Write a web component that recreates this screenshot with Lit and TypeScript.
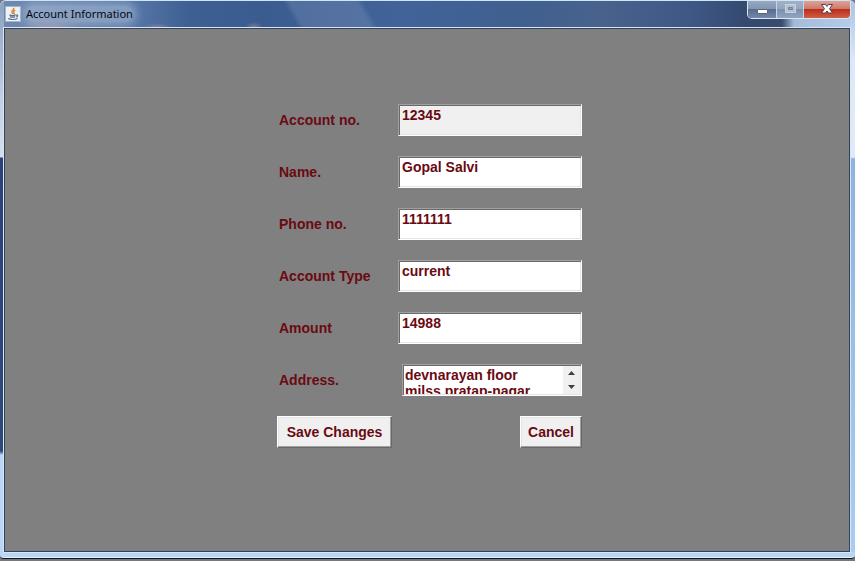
import { LitElement, html, css, svg } from "lit";
import { customElement, state } from "lit/decorators.js";

interface Field {
  id: string;
  label: string;
  value: string;
  readonly?: boolean;
}

const fields: Field[] = [
  { id: "account-no", label: "Account no.", value: "12345", readonly: true },
  { id: "name", label: "Name.", value: "Gopal Salvi" },
  { id: "phone", label: "Phone no.", value: "1111111" },
  { id: "type", label: "Account Type", value: "current" },
  { id: "amount", label: "Amount", value: "14988" },
];

const javaIcon = svg`
  <rect x="0.5" y="0.5" width="15" height="15" fill="#eef1f5" stroke="#a3b4c9"/>
  <path d="M8.800 1.800c.8 1.600-2.600 2.500-1.900 4.200.2.6.8 1.100 1 1.900M10.200 4.200c-1.800.8-2 1.500-1.200 2.500.4.5.2 1-.3 1.500" fill="none" stroke="#e0782a" stroke-width="1.300"/>
  <path d="M4.400 8.900c1.600.8 4.700.7 6.200 0M5 10.600c1.400.7 3.600.7 5.200 0M3.200 12.600c2 1.300 7.300 1.100 9.300-.2M10.900 9.200c2.400-.7 2.400 1.300.3 2.100" fill="none" stroke="#4f7196" stroke-width="1.200"/>`;

@customElement("app-root")
export class AppRoot extends LitElement {
  @state() private address = "devnarayan floor\nmilss pratap-nagar";

  static styles = css`
    :host {
      display: block;
      font-family: "Liberation Sans", Arial, sans-serif;
      --ink: #6a0a12;
      --face: #f0f0f0;
    }
    * { box-sizing: border-box; }
    .desktop {
      display: flex;
      flex-direction: column;
      min-height: 100vh;
      padding-bottom: 2px;
      background: #74787c;
    }
    .window {
      flex: 1;
      display: flex;
      flex-direction: column;
      padding: 0 4px 6px;
      border-top: 1px solid #cfe6fa;
      border-bottom: 1px solid #10161e;
      border-radius: 6px 6px 4px 4px;
      box-shadow: inset 0 -1px #e6f3fe;
      background:
        linear-gradient(#b9d6f4, #b9d6f4) bottom / 100% 6px no-repeat,
        linear-gradient(#8ba1c0 0, #c3d0e4 100px, #d5deed 156px, #2c4375 157px, #2f4979 450px, #b9d6f4 454px) left / 4px 100% no-repeat,
        linear-gradient(#a9c4e2 0, #dce9f8 60px, #e0ebf8 156px, #8db4de 158px, #a9cdf3 100%) right / 5px 100% no-repeat,
        radial-gradient(ellipse 9px 6px at 254px 27px, #b38f95aa, transparent) top / 100% 27px no-repeat,
        radial-gradient(ellipse 32px 8px at 50px 27px, #b094a4aa, transparent) top / 100% 27px no-repeat,
        radial-gradient(ellipse 14px 5px at 157px 27px, #a68fa4aa, transparent) top / 100% 27px no-repeat,
        linear-gradient(60deg, transparent 258px, #ffffff1c 264px, #ffffff1c 322px, transparent 328px) top / 100% 27px no-repeat,
        linear-gradient(90deg, #7089b0 0, #5878a7 130px, #3e5f92 190px, #3b5c90 260px, #41639a 400px, #40608f 520px, #48628d 600px, #3f5785 690px, #34496f 750px, #3a4c70 782px, #a4bcda 794px, #b4cdea 100%) top / 100% 27px no-repeat,
        #b9d6f4;
    }
    .titlebar {
      display: flex;
      align-items: flex-start;
      height: 27px;
      padding-left: 1px;
    }
    .caption {
      display: flex;
      align-items: center;
      gap: 5px;
      height: 25px;
    }
    .caption svg { display: block; }
    h1 {
      margin: 0;
      font: 400 11px/16px "Noto Sans", "Open Sans", sans-serif;
      color: #05080e;
      background: #c4d2e466;
      border-radius: 8px;
      box-shadow: 0 0 8px 4px #c4d2e466;
    }
    .controls {
      display: flex;
      margin-left: auto;
      height: 18px;
      border: 1px solid #dce6f2;
      border-top: 0;
      border-radius: 0 0 5px 5px;
      overflow: hidden;
    }
    .controls button {
      display: grid;
      place-items: center;
      width: 27px;
      padding: 0;
      border: 0;
      border-right: 1px solid #c8d3e2;
      background: linear-gradient(#98a8c0, #8496b2 45%, #586c90 50%, #7488aa);
    }
    .controls .minimise { width: 29px; }
    .controls .maximise { background: linear-gradient(#a1b1c8, #95a6be 45%, #7c90ae 50%, #91a5c0); }
    .controls .close {
      width: 46px;
      border-right: 0;
      background: linear-gradient(#dda294, #cf796b 45%, #b92f1c 50%, #d15f42);
    }
    .client {
      flex: 1;
      display: flex;
      justify-content: center;
      align-items: flex-start;
      margin-right: 1px;
      padding: 75px 0 20px 5px;
      border: 1px solid #33435c;
      outline: 1px solid #d8e6f5;
      background: #808080;
    }
    form {
      display: flex;
      flex-direction: column;
      gap: 20px;
      width: 305px;
      font-size: 14px;
      line-height: 16px;
      font-weight: 700;
      color: var(--ink);
    }
    .row {
      display: grid;
      grid-template-columns: 121px minmax(0, 1fr);
      align-items: center;
    }
    label { padding-left: 2px; }
    input, textarea, form button {
      font: inherit;
      color: inherit;
      border-radius: 0;
      outline: 0;
    }
    input, .area {
      height: 32px;
      border: 1px solid;
      border-color: #a0a0a0 #fff #fff #a0a0a0;
      box-shadow: inset 1px 1px #696969, inset -1px -1px #e3e3e3;
      background: #fff;
    }
    input {
      width: 100%;
      min-width: 0;
      padding: 2px 3px 12px;
    }
    input:read-only { background: var(--face); }
    .area {
      display: flex;
      margin-left: 4px;
      padding: 1px;
    }
    textarea {
      flex: 1;
      min-width: 0;
      height: 28px;
      margin: 0;
      padding: 1px 0 0 1px;
      border: 0;
      resize: none;
      overflow: hidden;
      white-space: pre;
      background: transparent;
    }
    .scroll {
      display: flex;
      flex-direction: column;
      width: 17px;
    }
    .scroll button {
      flex: 1;
      display: grid;
      place-items: center;
      padding: 0;
      border: 0;
      background: var(--face);
    }
    .actions {
      display: flex;
      justify-content: space-between;
    }
    .actions button {
      height: 32px;
      min-width: 62px;
      padding: 0 6px;
      border: 1px solid;
      border-color: #fff #696969 #696969 #fff;
      box-shadow: inset -1px -1px #a0a0a0, inset 1px 1px #e3e3e3;
      background: var(--face);
    }
    .actions .save { min-width: 115px; }
  `;

  private scrollAddress(step: number) {
    this.renderRoot.querySelector("textarea")?.scrollBy(0, step);
  }

  render() {
    return html`
      <div class="desktop">
        <section class="window">
          <header class="titlebar">
            <div class="caption">
              <svg width="16" height="16" viewBox="0 0 16 16" aria-hidden="true">${javaIcon}</svg>
              <h1>Account Information</h1>
            </div>
            <div class="controls">
              <button class="minimise" aria-label="Minimise">
                <svg width="13" height="13" viewBox="0 0 13 13"><rect x="1.500" y="6.500" width="10" height="4" rx="0.500" fill="#fff" stroke="#5b6577"/></svg>
              </button>
              <button class="maximise" aria-label="Maximise" disabled>
                <svg width="13" height="13" viewBox="0 0 13 13"><path d="M1.500 1.500h10v8h-10z" fill="#b3c0d2" stroke="#c9d4e1"/><path d="M4.500 4.500h4v2h-4z" fill="#8b9cb5" stroke="#71839e"/></svg>
              </button>
              <button class="close" aria-label="Close">
                <svg width="14" height="13" viewBox="0 0 14 13"><path d="M1.500 1.500h4l1.500 2 1.500-2h4L9.500 5.700l3 4.300h-4L7 8l-1.500 2h-4l3-4.300z" fill="#fff" stroke="#5a3f4b"/></svg>
              </button>
            </div>
          </header>
          <main class="client">
            <form @submit=${(e: Event) => e.preventDefault()}>
              ${fields.map(
                (f) => html`
                  <div class="row">
                    <label for=${f.id}>${f.label}</label>
                    <input id=${f.id} type="text" .value=${f.value} ?readonly=${f.readonly} />
                  </div>
                `
              )}
              <div class="row">
                <label for="address">Address.</label>
                <div class="area">
                  <textarea id="address" .value=${this.address}></textarea>
                  <div class="scroll">
                    <button type="button" aria-label="Scroll up" @click=${() => this.scrollAddress(-16)}>
                      <svg width="7" height="4" viewBox="0 0 7 4"><path d="M0 4 3.500 0 7 4z" fill="#404040"/></svg>
                    </button>
                    <button type="button" aria-label="Scroll down" @click=${() => this.scrollAddress(16)}>
                      <svg width="7" height="4" viewBox="0 0 7 4"><path d="M0 0h7L3.500 4z" fill="#404040"/></svg>
                    </button>
                  </div>
                </div>
              </div>
              <div class="actions">
                <button class="save" type="submit">Save Changes</button>
                <button type="button">Cancel</button>
              </div>
            </form>
          </main>
        </section>
      </div>
    `;
  }
}
